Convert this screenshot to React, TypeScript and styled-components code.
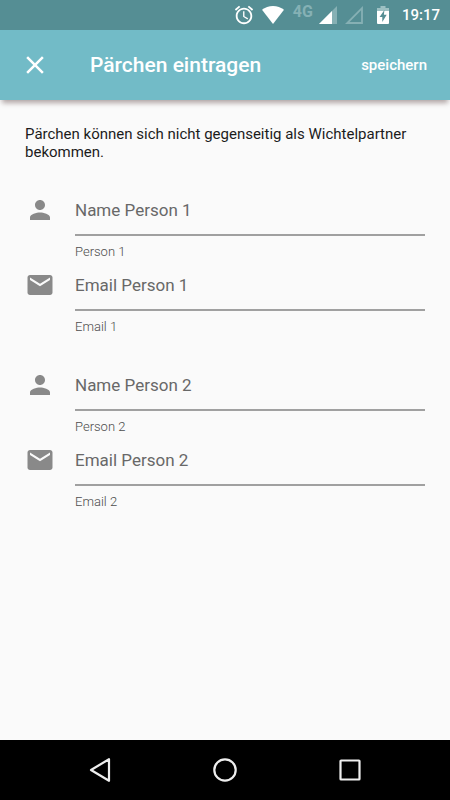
import React, { useId } from "react";
import styled, { createGlobalStyle } from "styled-components";

const GlobalStyle = createGlobalStyle`
  *, *::before, *::after { box-sizing: border-box; }
  body { margin: 0; background: #fafafa; font-family: Roboto, "Noto Sans", sans-serif; }
  button, input { font: inherit; color: inherit; }
`;

const Screen = styled.div`
  display: flex;
  flex-direction: column;
  min-height: 100vh;
  background: #fafafa;
`;

const StatusBar = styled.div`
  display: flex;
  align-items: center;
  justify-content: flex-end;
  height: 30px;
  padding-right: 10px;
  background: #558e94;
  color: #fff;
`;

const StatusIcon = styled.svg<{ $gap: number }>`
  flex: none;
  margin-right: ${(p) => p.$gap}px;
`;

const NetworkType = styled.span`
  margin: 0 6px 7px 0;
  color: #85b1b5;
  font-size: 16px;
  font-weight: 700;
  line-height: 16px;
`;

const Clock = styled.time`
  font-size: 15px;
  font-weight: 500;
  line-height: 32px;
`;

const AppBar = styled.header`
  display: flex;
  align-items: center;
  height: 70px;
  padding: 0 15px;
  background: #72bbc7;
  color: #fff;
  box-shadow: 0 5px 5px -2px rgba(40, 10, 10, 0.35);
`;

const BarButton = styled.button`
  display: flex;
  align-items: center;
  justify-content: center;
  height: 40px;
  padding: 0 8px;
  border: 0;
  background: none;
  cursor: pointer;
  font-size: 15px;
  font-weight: 500;
`;

const CloseButton = styled(BarButton)`
  width: 40px;
  padding: 0;
`;

const Title = styled.h1`
  flex: 1;
  margin: 0 0 0 35px;
  font-size: 21px;
  font-weight: 500;
  line-height: 30px;
`;

const Content = styled.main`
  flex: 1;
  padding: 25px;
`;

const Intro = styled.p`
  margin: 0 0 34px;
  color: #1c1c1c;
  font-size: 15px;
  line-height: 18px;
`;

const Form = styled.form`
  display: flex;
  flex-direction: column;
  gap: 25px;
`;

const PersonGroup = styled.fieldset`
  margin: 0;
  padding: 0;
  border: 0;
  min-width: 0;
`;

const FieldRow = styled.div`
  display: grid;
  grid-template-columns: 30px 1fr;
  column-gap: 20px;
  height: 75px;
`;

const FieldBody = styled.div`
  display: flex;
  flex-direction: column;
`;

const TextInput = styled.input`
  width: 100%;
  height: 41px;
  padding: 0 0 9px;
  border: 0;
  border-bottom: 2px solid #a0a0a0;
  border-radius: 0;
  outline: 0;
  background: transparent;
  color: #222;
  font-size: 17px;
  line-height: 30px;

  &::placeholder { color: #686868; opacity: 1; }
  &:focus { border-color: #72bbc7; }
`;

const Helper = styled.label`
  margin-top: 8px;
  color: #4c4c4c;
  font-size: 13px;
  font-weight: 300;
  line-height: 16px;
`;

const NavBar = styled.nav`
  display: grid;
  grid-template-columns: repeat(3, 1fr);
  height: 60px;
  padding: 0 calc(100% / 12);
  background: #000;
`;

const NavButton = styled.button`
  display: flex;
  align-items: center;
  justify-content: center;
  padding: 0;
  border: 0;
  background: none;
  cursor: pointer;
`;

const iconPaths = {
  person:
    "M12 12c2.21 0 4-1.79 4-4s-1.79-4-4-4-4 1.79-4 4 1.79 4 4 4zm0 2c-2.67 0-8 1.34-8 4v2h16v-2c0-2.66-5.33-4-8-4z",
  mail:
    "M20 4H4c-1.1 0-1.99.9-1.99 2L2 18c0 1.1.9 2 2 2h16c1.1 0 2-.9 2-2V6c0-1.1-.9-2-2-2zm0 4l-8 5-8-5V6l8 5 8-5v2z",
};

type FieldProps = {
  icon: keyof typeof iconPaths;
  type: string;
  placeholder: string;
  helper: string;
};

function Field({ icon, type, placeholder, helper }: FieldProps) {
  const id = useId();
  return (
    <FieldRow>
      <svg width="30" height="30" viewBox="0 0 24 24" fill="#898989" aria-hidden="true">
        <path d={iconPaths[icon]} />
      </svg>
      <FieldBody>
        <TextInput id={id} type={type} placeholder={placeholder} />
        <Helper htmlFor={id}>{helper}</Helper>
      </FieldBody>
    </FieldRow>
  );
}

const navItems = [
  { label: "Zurück", shape: <path d="M24 4.2v21.6L6 15z" /> },
  { label: "Startseite", shape: <circle cx="15" cy="15" r="10.7" /> },
  { label: "Übersicht", shape: <rect x="5.5" y="5.5" width="19" height="19" rx="0.6" /> },
];

export default function App() {
  return (
    <Screen>
      <GlobalStyle />
      <StatusBar>
        <StatusIcon $gap={7} width="22" height="22" viewBox="0 0 24 24" fill="#fff" aria-hidden="true">
          <path d="M22 5.72l-4.6-3.86-1.29 1.53 4.6 3.86L22 5.72zM7.88 3.39L6.6 1.86 2 5.71l1.29 1.53 4.59-3.85zM12.5 8H11v6l4.75 2.85.75-1.23-4-2.37V8zM12 4c-4.97 0-9 4.03-9 9s4.02 9 9 9c4.97 0 9-4.03 9-9s-4.03-9-9-9zm0 16c-3.87 0-7-3.13-7-7s3.13-7 7-7 7 3.13 7 7-3.13 7-7 7z" />
        </StatusIcon>
        <StatusIcon $gap={9} width="22" height="18" viewBox="0 0 22 18" fill="#fff" aria-hidden="true">
          <path d="M11 18L0 3.8C3 1.4 7 0 11 0S19 1.4 22 3.8z" />
        </StatusIcon>
        <NetworkType>4G</NetworkType>
        <StatusIcon $gap={8} width="18" height="18" viewBox="0 0 18 18" aria-hidden="true">
          <path d="M18 0v18H0z" fill="#86b0b4" />
          <path d="M13 5v13H0z" fill="#fff" />
        </StatusIcon>
        <StatusIcon $gap={14} width="18" height="18" viewBox="0 0 18 18" aria-hidden="true">
          <path d="M17 2.2V17H2.2z" fill="none" stroke="#86b0b4" strokeWidth="1.8" />
        </StatusIcon>
        <StatusIcon $gap={13} width="12" height="18" viewBox="0 0 12 18" aria-hidden="true">
          <path d="M0 2h3.5V0h5v2H12v4H0z" fill="#9dc0c3" />
          <path d="M0 5h12v12q0 1-1 1H1q-1 0-1-1z" fill="#fff" />
          <path d="M7.4 4L2.6 11h2.7v5l4.4-7.2H6.9z" fill="#558e94" />
        </StatusIcon>
        <Clock>19:17</Clock>
      </StatusBar>

      <AppBar>
        <CloseButton type="button" aria-label="Schließen">
          <svg width="30" height="30" viewBox="0 0 24 24" fill="#fff" aria-hidden="true">
            <path d="M19 6.41L17.59 5 12 10.59 6.41 5 5 6.41 10.59 12 5 17.59 6.41 19 12 13.41 17.59 19 19 17.59 13.41 12z" />
          </svg>
        </CloseButton>
        <Title>Pärchen eintragen</Title>
        <BarButton type="submit" form="couple">speichern</BarButton>
      </AppBar>

      <Content>
        <Intro>Pärchen können sich nicht gegenseitig als Wichtelpartner bekommen.</Intro>
        <Form id="couple" onSubmit={(e) => e.preventDefault()}>
          {[1, 2].map((n) => (
            <PersonGroup key={n} aria-label={`Person ${n}`}>
              <Field icon="person" type="text" placeholder={`Name Person ${n}`} helper={`Person ${n}`} />
              <Field icon="mail" type="email" placeholder={`Email Person ${n}`} helper={`Email ${n}`} />
            </PersonGroup>
          ))}
        </Form>
      </Content>

      <NavBar>
        {navItems.map(({ label, shape }) => (
          <NavButton key={label} type="button" aria-label={label}>
            <svg
              width="30"
              height="30"
              viewBox="0 0 30 30"
              fill="none"
              stroke="#eee"
              strokeWidth="2.2"
              strokeLinejoin="round"
              aria-hidden="true"
            >
              {shape}
            </svg>
          </NavButton>
        ))}
      </NavBar>
    </Screen>
  );
}
